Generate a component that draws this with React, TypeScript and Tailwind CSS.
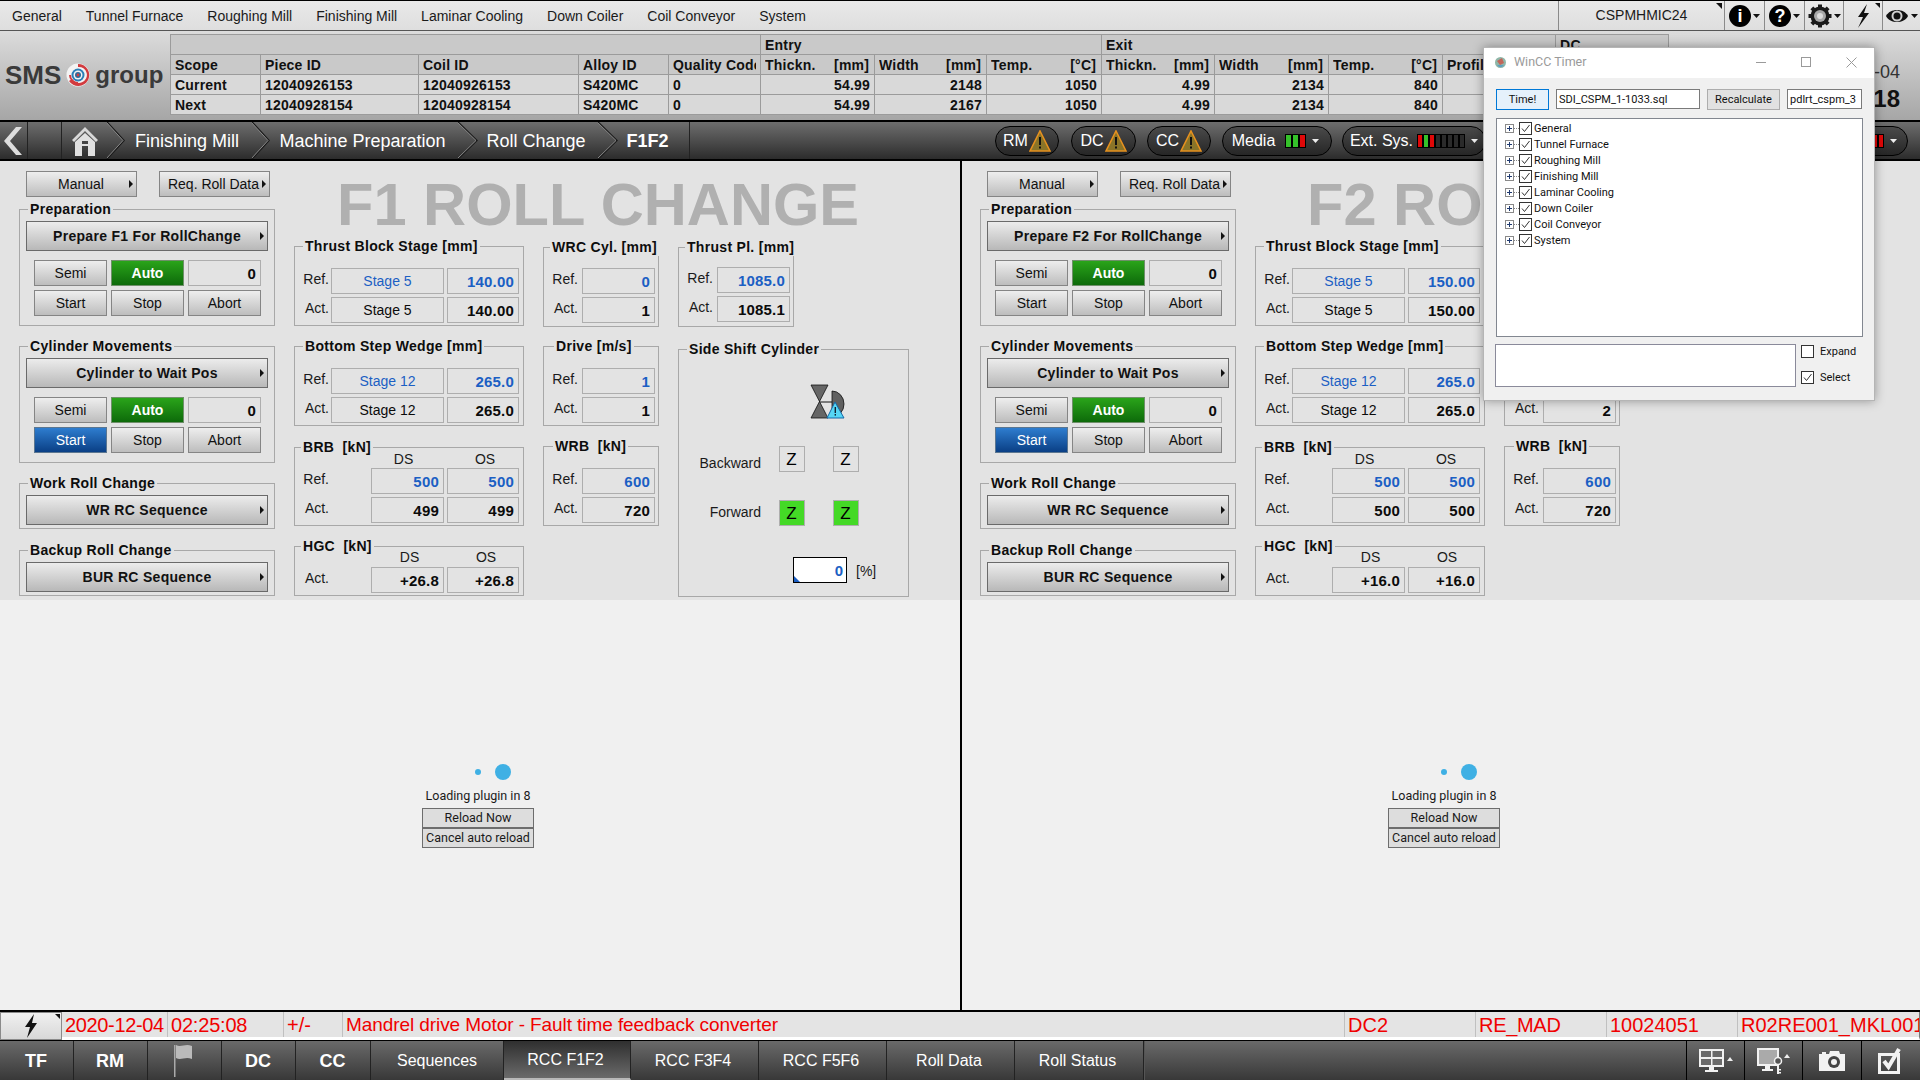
import React from "react";

const FONT = "font-['Liberation_Sans',Arial,sans-serif]";

function Arrow({ className = "" }: { className?: string }) {
  return (
    <svg width="4" height="8" viewBox="0 0 4 8" className={className}>
      <path d="M0 0 L4 4 L0 8 Z" fill="#111" />
    </svg>
  );
}

function Btn({ label, w, h = 26, bold, tone = "gray", arrow, dark, pad = 0 }: { label: string; w: number | string; h?: number; bold?: boolean; tone?: "gray" | "green" | "blue"; arrow?: boolean; dark?: boolean; pad?: number }) {
  const toneCls =
    tone === "green"
      ? "bg-[linear-gradient(#2aa41a,#0d6a0a)] text-white border-[#6f8f6a] font-bold"
      : tone === "blue"
        ? "bg-[linear-gradient(#2e7dcf,#0a3f85)] text-white border-[#5b7690]"
        : dark
          ? "bg-[linear-gradient(#ececec,#b8b8b8)] text-[#111] border-[#6a6a6a]"
          : "bg-[linear-gradient(#eeeeee,#bdbdbd)] text-[#111] border-[#858585]";
  return (
    <div
      style={{ width: w, height: h, paddingRight: pad }}
      className={`relative flex shrink-0 items-center justify-center border text-[14px] leading-none ${toneCls} ${bold ? "font-bold tracking-[0.3px]" : ""}`}
    >
      <span className="whitespace-nowrap">{label}</span>
      {arrow && <Arrow className="absolute right-[3px] top-1/2 -translate-y-1/2" />}
    </div>
  );
}

function Box({ v, w, blue, align = "right", h = 26 }: { v: string; w: number; blue?: boolean; align?: "right" | "center"; h?: number }) {
  return (
    <div
      style={{ width: w, height: h }}
      className={`flex shrink-0 items-center border border-[#aeaeae] text-[14px] leading-none ${align === "right" ? "justify-end pr-[4px] text-[15px] font-bold tracking-[0.2px]" : "justify-center"} ${blue ? "text-[#1b5fc4]" : "text-[#0b0b0b]"}`}
    >
      {v}
    </div>
  );
}

function Group({ legend, legendLeft = 8, w, h, className = "", hideLegend, children }: { legend: string; legendLeft?: number; w: number; h: number; className?: string; hideLegend?: boolean; children?: React.ReactNode }) {
  return (
    <div style={{ width: w, height: h }} className={`relative shrink-0 border border-[#a8a8a8] ${className}`}>
      <div style={{ left: legendLeft }} className={`absolute -top-[10px] whitespace-pre bg-[#e3e3e3] px-[2px] text-[14px] font-bold leading-[18px] tracking-[0.3px] text-[#0d0d0d] ${hideLegend ? "invisible" : ""}`}>
        {legend}
      </div>
      {children}
    </div>
  );
}

function Lbl({ t, w = 36 }: { t: string; w?: number }) {
  return (
    <div style={{ width: w }} className="shrink-0 pb-[4px] pr-[2px] text-right text-[14px] leading-none text-[#1a1a1a]">
      {t}
    </div>
  );
}

function ControlBlock({ title, action, hi, h = 117 }: { title: string; action: string; hi?: boolean; h?: number }) {
  return (
    <Group legend={title} legendLeft={8} w={256} h={h} className="px-[6px] pt-[11px]">
      <Btn label={action} w={242} h={30} bold arrow dark />
      <div className="mt-[9px] grid grid-cols-[73px_73px_73px] gap-x-[4px] gap-y-[4px] pl-[8px]">
        <Btn label="Semi" w={73} />
        <Btn label="Auto" w={73} tone="green" />
        <Box v="0" w={73} />
        <Btn label="Start" w={73} tone={hi ? "blue" : "gray"} />
        <Btn label="Stop" w={73} />
        <Btn label="Abort" w={73} />
      </div>
    </Group>
  );
}

function SeqBlock({ title, action, mt }: { title: string; action: string; mt: string }) {
  return (
    <div className={mt}>
      <Group legend={title} w={256} h={46} className="px-[6px] pt-[11px]">
        <Btn label={action} w={242} h={30} bold arrow dark />
      </Group>
    </div>
  );
}

function StageGroup({ legend, legendLeft, ref1, ref2, act1, act2, className }: { legend: string; legendLeft?: number; ref1: string; ref2: string; act1: string; act2: string; className?: string }) {
  return (
    <Group legend={legend} legendLeft={legendLeft} w={230} h={80} className={`pt-[21px] ${className || ""}`}>
      <div className="flex items-center">
        <Lbl t="Ref." w={36} />
        <Box v={ref1} w={113} blue align="center" />
        <div className="w-[3px]" />
        <Box v={ref2} w={72} blue />
      </div>
      <div className="mt-[3px] flex items-center">
        <Lbl t="Act." w={36} />
        <Box v={act1} w={113} align="center" />
        <div className="w-[3px]" />
        <Box v={act2} w={72} />
      </div>
    </Group>
  );
}

function SmallGroup({ legend, legendLeft, r, a, pt = 20, className = "", covered }: { legend: string; legendLeft?: number; r: string; a: string; pt?: number; className?: string; covered?: "all" | "top" }) {
  return (
    <Group legend={legend} legendLeft={legendLeft} w={116} h={80} className={`${className} ${covered === "all" ? "invisible" : ""}`} hideLegend={covered === "top"}>
      <div style={{ paddingTop: pt }}>
        <div className={`flex items-center ${covered ? "invisible" : ""}`}>
          <Lbl t="Ref." />
          <div className="w-[2px]" />
          <Box v={r} w={73} blue />
        </div>
        <div className="mt-[3px] flex items-center">
          <Lbl t="Act." />
          <div className="w-[2px]" />
          <Box v={a} w={73} />
        </div>
      </div>
    </Group>
  );
}

function Valve() {
  return (
    <svg width="36" height="36" viewBox="0 0 36 36">
      <path d="M22 7 A 12 13 0 0 1 22 33 Z" fill="#606060" stroke="#111" strokeWidth="0.8" />
      <path d="M1 1 L18 1 L1 34 L18 34 Z" fill="#666" stroke="#111" strokeWidth="0.8" />
      <line x1="10" y1="18" x2="22" y2="18" stroke="#111" strokeWidth="1" />
      <path d="M25 18 L34 34 L17 34 Z" fill="#55d6f5" stroke="#1668a8" strokeWidth="1" />
      <rect x="24.6" y="23" width="1.4" height="6" fill="#123" />
      <rect x="24.6" y="30" width="1.4" height="1.6" fill="#123" />
    </svg>
  );
}

function ZBox({ on }: { on?: boolean }) {
  return (
    <div className={`flex h-[26px] w-[26px] shrink-0 items-center justify-center border border-[#aeaeae] pr-[1px] text-[17px] leading-none text-black ${on ? "bg-[#44d926]" : ""}`}>Z</div>
  );
}

function SideShift() {
  return (
    <Group legend="Side Shift Cylinder" legendLeft={8} w={231} h={248} className="mt-[22px] pt-[34px]">
      <div className="pl-[131px]">
        <Valve />
      </div>
      <div className="mt-[26px] flex items-center">
        <div className="w-[82px] pt-[8px] text-right text-[14px] leading-none text-[#1a1a1a]">Backward</div>
        <div className="ml-[18px]"><ZBox /></div>
        <div className="ml-[28px]"><ZBox /></div>
      </div>
      <div className="mt-[28px] flex items-center">
        <div className="w-[82px] pb-[2px] text-right text-[14px] leading-none text-[#1a1a1a]">Forward</div>
        <div className="ml-[18px]"><ZBox on /></div>
        <div className="ml-[28px]"><ZBox on /></div>
      </div>
      <div className="ml-[114px] mt-[31px] flex items-center">
        <div className="relative flex h-[26px] w-[54px] items-center justify-end border border-black bg-white pr-[3px] text-[15px] font-bold leading-none text-[#1b5fc4]">
          0
          <svg width="6" height="6" viewBox="0 0 6 6" className="absolute bottom-0 left-0"><path d="M0 0 L6 6 L0 6 Z" fill="#1b5fc4" /></svg>
        </div>
        <div className="ml-[9px] pt-[2px] text-[14px] leading-none text-[#1a1a1a]">[%]</div>
      </div>
    </Group>
  );
}

type PanelData = { title: string; titlePl: string; prep: string; t: string; brbAct: string; hgc: string; drvAct: string; side?: boolean };

function Panel({ d, left }: { d: PanelData; left: number }) {
  return (
    <div className="h-[439px] bg-[#e3e3e3] pt-[10px]" style={{ paddingLeft: left }}>
      <div className="flex">
        <div className="w-[256px] shrink-0">
          <div className="flex h-[26px] gap-[22px] pl-[7px]">
            <Btn label="Manual" w={111} pad={1} arrow />
            <Btn label="Req. Roll Data" w={111} pad={2} arrow />
          </div>
          <div className="mt-[12px]"><ControlBlock title="Preparation" action={d.prep} /></div>
          <div className="mt-[20px]"><ControlBlock title="Cylinder Movements" action="Cylinder to Wait Pos" hi /></div>
          <SeqBlock title="Work Roll Change" action="WR RC Sequence" mt="mt-[20px]" />
          <SeqBlock title="Backup Roll Change" action="BUR RC Sequence" mt="mt-[21px]" />
        </div>
        <div className="ml-[19px]">
          <div className={`h-[75px] whitespace-nowrap text-[59.6px] font-bold leading-[68px] text-[#b0b0b0] ${d.titlePl}`}>{d.title}</div>
          <div className="flex">
            <div className="w-[230px] shrink-0">
              <StageGroup legend="Thrust Block Stage [mm]" legendLeft={8} ref1="Stage 5" ref2={d.t} act1="Stage 5" act2={d.t} />
              <StageGroup legend="Bottom Step Wedge [mm]" legendLeft={8} ref1="Stage 12" ref2="265.0" act1="Stage 12" act2="265.0" className="mt-[20px]" />
              <Group legend="BRB  [kN]" legendLeft={6} w={230} h={79} className="mt-[21px]">
                <div className="flex h-[20px] items-start pl-[72px] pt-[4px] text-[14px] leading-none text-[#1a1a1a]">
                  <div className="w-[73px] text-center">DS</div>
                  <div className="ml-[9px] w-[72px] text-center">OS</div>
                </div>
                <div className="flex items-center">
                  <Lbl t="Ref." /><div className="w-[40px]" />
                  <Box v="500" w={73} blue /><div className="w-[3px]" /><Box v="500" w={72} blue />
                </div>
                <div className="mt-[3px] flex items-center">
                  <Lbl t="Act." /><div className="w-[40px]" />
                  <Box v={d.brbAct} w={73} /><div className="w-[3px]" /><Box v={d.brbAct} w={72} />
                </div>
              </Group>
              <Group legend="HGC  [kN]" legendLeft={6} w={230} h={50} className="mt-[20px]">
                <div className="flex h-[20px] items-start pl-[78px] pt-[3px] text-[14px] leading-none text-[#1a1a1a]">
                  <div className="w-[73px] text-center">DS</div>
                  <div className="ml-[4px] w-[72px] text-center">OS</div>
                </div>
                <div className="flex items-center">
                  <Lbl t="Act." /><div className="w-[40px]" />
                  <Box v={d.hgc} w={73} /><div className="w-[3px]" /><Box v={d.hgc} w={72} />
                </div>
              </Group>
            </div>
            <div className="ml-[19px] w-[116px] shrink-0 pt-[1px]">
              <SmallGroup legend="WRC Cyl. [mm]" legendLeft={6} r="0" a="1" covered={d.side ? undefined : "all"} />
              <SmallGroup legend="Drive [m/s]" legendLeft={10} r="1" a={d.drvAct} pt={21} className="mt-[19px]" covered={d.side ? undefined : "top"} />
              <SmallGroup legend="WRB  [kN]" legendLeft={9} r="600" a="720" pt={21} className="mt-[20px]" />
            </div>
            {d.side && (
              <div className="ml-[19px] w-[116px] shrink-0 pt-[1px]">
                <SmallGroup legend="Thrust Pl. [mm]" legendLeft={6} r="1085.0" a="1085.1" pt={19} />
                <SideShift />
              </div>
            )}
          </div>
        </div>
      </div>
    </div>
  );
}

function Loading({ cls }: { cls: string }) {
  return (
    <div className={`flex flex-1 flex-col items-center bg-[#f0f0f0] pt-[164px] font-['Roboto',sans-serif] text-[12.5px] text-[#1a1a1a] ${cls}`}>
      <div className="flex h-[16px] w-[112px] items-center pl-[53px]">
        <div className="h-[6px] w-[6px] rounded-full bg-[#3fb0e4]" />
        <div className="ml-[14px] h-[16px] w-[16px] rounded-full bg-[#3fb0e4]" />
      </div>
      <div className="mt-[8px] h-[16px] leading-[16px]">Loading plugin in 8</div>
      <div className="mt-[4px] flex h-[20px] w-[112px] items-center justify-center border border-[#6d6d6d] bg-[#dddddd] pt-[1px] leading-none">Reload Now</div>
      <div className="flex h-[20px] w-[112px] items-center justify-center border border-[#6d6d6d] bg-[#dddddd] pt-[1px] leading-none">Cancel auto reload</div>
    </div>
  );
}

function Caret({ color = "#111" }: { color?: string }) {
  return (
    <svg width="7" height="4" viewBox="0 0 7 4"><path d="M0 0 H7 L3.5 4 Z" fill={color} /></svg>
  );
}

function TopIcon({ children, w = 40 }: { children: React.ReactNode; w?: number }) {
  return (
    <div style={{ width: w }} className="flex h-full shrink-0 items-center justify-center gap-[2px] border-l border-[#8a8a8a]">
      {children}
    </div>
  );
}

function GlyphCircle({ c }: { c: string }) {
  return (
    <div className="flex h-[22px] w-[22px] items-center justify-center rounded-full bg-black text-[18px] font-bold leading-none text-white">{c}</div>
  );
}

function TopBar() {
  const items = ["General", "Tunnel Furnace", "Roughing Mill", "Finishing Mill", "Laminar Cooling", "Down Coiler", "Coil Conveyor", "System"];
  return (
    <div className="flex h-[31px] shrink-0 items-stretch border-y border-t-black border-b-[#555] bg-[linear-gradient(#e9e9e9,#dedede)]">
      <div className="flex flex-1 items-center gap-[24px] pl-[12px] text-[14px] leading-none text-[#1a1a1a]">
        {items.map((i) => <span key={i} className="whitespace-nowrap">{i}</span>)}
      </div>
      <div className="relative flex w-[166px] items-center justify-center border-l border-[#8a8a8a] text-[14px] text-[#1a1a1a]">
        CSPMHMIC24
        <svg width="6" height="6" viewBox="0 0 6 6" className="absolute right-[2px] top-[2px]"><path d="M0 0 H6 V6 Z" fill="#111" /></svg>
      </div>
      <TopIcon><GlyphCircle c="i" /><Caret /></TopIcon>
      <TopIcon><GlyphCircle c="?" /><Caret /></TopIcon>
      <TopIcon w={39}>
        <svg width="24" height="24" viewBox="0 0 24 24">
          <g fill="#1a1a1a">
            <circle cx="12" cy="12" r="9.500" />
            <rect x="10" y="0.500" width="4" height="23" />
            <rect x="0.500" y="10" width="23" height="4" />
            <rect x="10" y="0.500" width="4" height="23" transform="rotate(45 12 12)" />
            <rect x="10" y="0.500" width="4" height="23" transform="rotate(-45 12 12)" />
          </g>
          <circle cx="12" cy="12" r="6" fill="#a8a8a8" />
          <circle cx="12" cy="12" r="3" fill="#dcdcdc" />
        </svg>
        <Caret />
      </TopIcon>
      <TopIcon w={39}>
        <div className="relative flex h-full w-full items-center justify-center">
          <svg width="16" height="24" viewBox="0 0 16 24"><path d="M12 0 L3 13 H8 L3 24 L14 9 H9 Z" fill="#111" /></svg>
          <svg width="5" height="5" viewBox="0 0 5 5" className="absolute right-[2px] top-[2px]"><path d="M0 0 H5 V5 Z" fill="#111" /></svg>
        </div>
      </TopIcon>
      <TopIcon w={38}>
        <svg width="24" height="18" viewBox="0 0 24 18">
          <path d="M1 9 C5 1 19 1 23 9 C19 17 5 17 1 9 Z" fill="#111" />
          <circle cx="12" cy="9" r="5.500" fill="#cfcfcf" />
          <circle cx="12" cy="9" r="3.500" fill="#111" />
        </svg>
        <Caret />
      </TopIcon>
    </div>
  );
}

function Logo() {
  return (
    <div className="flex w-[170px] shrink-0 items-center pb-[1px] pl-[5px] text-[#3a3a3a]">
      <span className="text-[26px] font-bold leading-none">SMS</span>
      <svg width="24" height="24" viewBox="0 0 24 24" className="ml-[5px] shrink-0">
        <circle cx="12" cy="12" r="11.500" fill="#f3f3f3" />
        <path d="M12 1 A 11 11 0 1 1 3 18 L6 16 A 8 8 0 1 0 12 4 Z" fill="#d23b3f" />
        <path d="M12 21 A 9 9 0 0 1 3 12 L5 12 A 7 7 0 0 0 12 19 Z" fill="#d23b3f" />
        <circle cx="12" cy="12" r="6.500" fill="#2b7fb8" />
        <circle cx="12" cy="12" r="4.500" fill="#f3f3f3" />
        <circle cx="12" cy="12" r="3" fill="#2b6c9c" />
        <circle cx="12" cy="12" r="1.400" fill="#d23b3f" />
      </svg>
      <span className="ml-[5px] text-[24px] font-bold leading-none">group</span>
    </div>
  );
}

function Th({ a, b, className = "" }: { a: string; b?: string; className?: string }) {
  return (
    <td className={`overflow-hidden whitespace-nowrap border border-[#9b9b9b] bg-[#c9c9c9] px-[4px] ${className}`}>
      <div className="flex justify-between overflow-hidden"><span>{a}</span>{b && <span className="pr-[1px]">{b}</span>}</div>
    </td>
  );
}

function Tr({ cells }: { cells: string[] }) {
  return (
    <tr className="h-[20px] bg-[#d9d9d9]">
      {cells.map((c, i) => (
        <td key={i} className={`overflow-hidden whitespace-nowrap border border-[#9b9b9b] px-[4px] ${i >= 5 ? "text-right" : ""}`}>{c}</td>
      ))}
    </tr>
  );
}

function InfoTable() {
  const widths = [90, 158, 160, 90, 92, 114, 112, 115, 113, 114, 114, 113, 113];
  return (
    <table className="w-[1498px] shrink-0 table-fixed border-collapse self-start text-[14px] font-bold leading-[16px] tracking-[0.2px] text-[#111]">
      <colgroup>{widths.map((w, i) => <col key={i} style={{ width: w }} />)}</colgroup>
      <tbody>
        <tr className="h-[20px] bg-[#c9c9c9]">
          <td colSpan={5} className="border border-[#9b9b9b]" />
          <td colSpan={3} className="border border-[#9b9b9b] px-[4px]">Entry</td>
          <td colSpan={4} className="border border-[#9b9b9b] px-[4px]">Exit</td>
          <td className="border border-[#9b9b9b] px-[4px]">DC</td>
        </tr>
        <tr className="h-[20px]">
          <Th a="Scope" /><Th a="Piece ID" /><Th a="Coil ID" /><Th a="Alloy ID" /><Th a="Quality Code" />
          <Th a="Thickn." b="[mm]" /><Th a="Width" b="[mm]" /><Th a="Temp." b="[°C]" />
          <Th a="Thickn." b="[mm]" /><Th a="Width" b="[mm]" /><Th a="Temp." b="[°C]" /><Th a="Profile" /><Th a="" />
        </tr>
        <Tr cells={["Current", "12040926153", "12040926153", "S420MC", "0", "54.99", "2148", "1050", "4.99", "2134", "840", "", ""]} />
        <Tr cells={["Next", "12040928154", "12040928154", "S420MC", "0", "54.99", "2167", "1050", "4.99", "2134", "840", "", ""]} />
      </tbody>
    </table>
  );
}

function Header() {
  return (
    <div className="flex h-[89px] shrink-0 items-start bg-[linear-gradient(#dcdcdc,#a6a6a6)]">
      <div className="flex h-full items-center"><Logo /></div>
      <div className="pt-[3px]"><InfoTable /></div>
      <div className="flex-1 pr-[20px] pt-[32px] text-right leading-none">
        <div className="text-[18px] text-[#333]">2020-12-04</div>
        <div className="mt-[6px] text-[24px] font-bold text-[#111]">02:25:18</div>
      </div>
    </div>
  );
}

function Chevron({ w = 20 }: { w?: number }) {
  return (
    <svg width={w} height="37" viewBox={`0 0 ${w} 37`} className="shrink-0">
      <path d={`M0 0 L${w - 1} 18.500 L0 37`} fill="none" stroke="#1a1a1a" strokeWidth="1.500" />
      <path d={`M-1 0 L${w - 2} 18.500 L-1 37`} fill="none" stroke="#8a8a8a" strokeWidth="1" />
    </svg>
  );
}

function Warn() {
  return (
    <svg width="22" height="22" viewBox="0 0 22 22" className="-ml-[1px] shrink-0">
      <path d="M11 1 L21 21 H1 Z" fill="#8a7428" stroke="#e6911f" strokeWidth="1.600" />
      <rect x="10" y="7" width="2" height="8" fill="#111" />
      <rect x="10" y="16.500" width="2" height="2" fill="#111" />
    </svg>
  );
}

function Pill({ children, w, className = "" }: { children: React.ReactNode; w: number; className?: string }) {
  return (
    <div style={{ width: w }} className={`flex h-[30px] shrink-0 items-center justify-center gap-[2px] rounded-full border border-black bg-[linear-gradient(#4a4a4a,#262626)] text-[16px] leading-none text-white ${className}`}>
      {children}
    </div>
  );
}

function Leds({ c, w }: { c: string[]; w: number }) {
  return (
    <div className="flex h-[14px] shrink-0">
      {c.map((x, i) => <div key={i} style={{ backgroundColor: x, width: w }} className="h-full border border-black" />)}
    </div>
  );
}

function Home() {
  return (
    <svg width="26" height="30" viewBox="0 0 26 30">
      <path d="M13 1 L26 14 L24 16 L13 5 L2 16 L0 14 Z" fill="#d8d8d8" />
      <path d="M3 16 L13 7 L23 16 V30 H16 V20 H10 V30 H3 Z" fill="#e0e0e0" />
      <rect x="10" y="15" width="6" height="3" fill="#444" />
    </svg>
  );
}

function Nav() {
  return (
    <div className="flex h-[41px] shrink-0 items-stretch border-y-2 border-black bg-[linear-gradient(#6e6e6e,#2c2c2c)] text-[18px] leading-none text-white">
      <div className="flex w-[28px] items-center justify-center border-r border-[#222]">
        <svg width="20" height="28" viewBox="0 0 20 28"><path d="M18 0 L6 14 L18 28 H12 L0 14 L12 0 Z" fill="#ddd" /></svg>
      </div>
      <div className="w-[34px] border-r border-[#222]" />
      <div className="flex w-[45px] items-center justify-center pl-[1px]"><Home /></div>
      <Chevron w={18} />
      <div className="flex w-[127px] items-center justify-center pr-[3px]">Finishing Mill</div>
      <Chevron w={18} />
      <div className="flex w-[188px] items-center justify-center pr-[3px]">Machine Preparation</div>
      <Chevron />
      <div className="flex w-[120px] items-center justify-center pr-[4px]">Roll Change</div>
      <Chevron />
      <div className="flex w-[72px] items-center justify-center border-r border-[#222] pr-[12px] font-bold">F1F2</div>
      <div className="flex flex-1 items-center pl-[305px]">
        <Pill w={64}>RM<Warn /></Pill>
        <Pill w={65} className="ml-[12px]">DC<Warn /></Pill>
        <Pill w={64} className="ml-[11px]">CC<Warn /></Pill>
        <Pill w={110} className="ml-[11px] pr-[3px]">Media<div className="ml-[8px]"><Leds w={7} c={["#35c22a", "#35c22a", "#e00808"]} /></div><div className="ml-[4px]"><Caret color="#eee" /></div></Pill>
        <Pill w={144} className="ml-[10px]">Ext. Sys.<div className="ml-[2px]"><Leds w={6} c={["#e00808", "#35c22a", "#e00808", "#2a2a2a", "#2a2a2a", "#2a2a2a", "#2a2a2a", "#2a2a2a"]} /></div><div className="ml-[4px]"><Caret color="#eee" /></div></Pill>
        <Pill w={150} className="ml-[272px] justify-end pr-[10px]"><Leds w={6} c={["#e00808", "#e00808"]} /><div className="ml-[4px]"><Caret color="#eee" /></div></Pill>
      </div>
    </div>
  );
}

function Status() {
  const fields: [string, number, string][] = [
    ["2020-12-04", 106, "tracking-[-0.35px]"],
    ["02:25:08", 116, "tracking-[-0.2px]"],
    ["+/-", 59, ""],
    ["Mandrel drive Motor - Fault time feedback converter", 1002, "text-[19px] tracking-[-0.08px]"],
    ["DC2", 131, ""],
    ["RE_MAD", 131, "tracking-[-0.3px]"],
    ["10024051", 131, ""],
    ["R02RE001_MKL001", 182, ""],
  ];
  return (
    <div className="flex h-[30px] shrink-0 border-t-2 border-black bg-[#e4e4e4]">
      <div className="relative flex w-[62px] shrink-0 items-center justify-center border border-[#8a8a8a] bg-[linear-gradient(#f0f0f0,#d8d8d8)]">
        <svg width="14" height="24" viewBox="0 0 14 24"><path d="M10 0 L1 13 H6 L3 24 L13 9 H8 Z" fill="#111" /></svg>
        <svg width="5" height="5" viewBox="0 0 5 5" className="absolute right-[1px] top-[1px]"><path d="M0 0 H5 V5 Z" fill="#111" /></svg>
      </div>
      <div className="flex flex-1 overflow-hidden border-b-[3px] border-r border-b-white border-r-[#777] text-[20px] leading-none text-[#f00000]">
        {fields.map(([t, w, c]) => (
          <div key={t} style={{ width: w }} className={`flex shrink-0 items-center overflow-hidden whitespace-nowrap border-r border-[#c0c0c0] pl-[3px] ${c}`}>{t}</div>
        ))}
      </div>
    </div>
  );
}

function Tab({ w, children, active, bold, ml }: { w: number; children: React.ReactNode; active?: boolean; bold?: boolean; ml?: number }) {
  return (
    <div
      style={{ width: w, marginLeft: ml }}
      className={`flex shrink-0 items-center justify-center border-r border-[#222] leading-none text-white ${bold ? "pr-[1px] text-[18px] font-bold" : "pr-[3px] text-[16px]"} ${active ? "bg-[linear-gradient(#2f2f2f,#6a6a6a)] border-b-2 border-b-[#b8b8b8]" : "bg-[linear-gradient(#6a6a6a,#383838)]"}`}
    >
      {children}
    </div>
  );
}

function BottomTabs() {
  return (
    <div className="flex h-[40px] shrink-0 border-t border-black bg-[linear-gradient(#6a6a6a,#383838)]">
      <Tab w={74} bold>TF</Tab>
      <Tab w={74} bold>RM</Tab>
      <Tab w={74}>
        <svg width="20" height="36" viewBox="0 0 20 36"><rect x="1" y="2" width="1.500" height="32" fill="#aaa" /><path d="M3 2 C8 5 12 0 19 3 V16 C12 13 8 18 3 15 Z" fill="#bbb" /></svg>
      </Tab>
      <Tab w={74} bold>DC</Tab>
      <Tab w={75} bold>CC</Tab>
      <Tab w={130} ml={3}>Sequences</Tab>
      <Tab w={127} active>RCC F1F2</Tab>
      <Tab w={128}>RCC F3F4</Tab>
      <Tab w={128}>RCC F5F6</Tab>
      <Tab w={128}>Roll Data</Tab>
      <Tab w={129}>Roll Status</Tab>
      <div className="flex-1 border-l border-[#555]" />
      <div className="flex w-[59px] shrink-0 items-center justify-center border-x border-black">
        <svg width="34" height="24" viewBox="0 0 34 24">
          <rect x="0" y="0" width="25" height="18" fill="#f2f2f2" />
          <rect x="2" y="2" width="10" height="6" fill="#6a6a6a" /><rect x="13.500" y="2" width="9.500" height="6" fill="#6a6a6a" />
          <rect x="2" y="10" width="10" height="6" fill="#6a6a6a" /><rect x="13.500" y="10" width="9.500" height="6" fill="#6a6a6a" />
          <rect x="10" y="18" width="5" height="3" fill="#f2f2f2" /><rect x="6" y="21" width="13" height="2" fill="#f2f2f2" />
          <path d="M28 12 L31 8 L34 12 Z" fill="#eee" />
        </svg>
      </div>
      <div className="flex w-[58px] shrink-0 items-center justify-center border-r border-black">
        <svg width="34" height="26" viewBox="0 0 34 26">
          <rect x="0" y="0" width="22" height="18" fill="#f2f2f2" />
          <rect x="2" y="2" width="18" height="14" fill="#aaa" />
          <rect x="8" y="18" width="5" height="3" fill="#f2f2f2" /><rect x="5" y="21" width="11" height="2" fill="#f2f2f2" />
          <circle cx="21" cy="13" r="3.500" fill="#555" stroke="#f2f2f2" strokeWidth="1.500" />
          <rect x="20" y="16" width="2" height="10" fill="#f2f2f2" /><rect x="22" y="21" width="2" height="1.500" fill="#f2f2f2" /><rect x="22" y="24" width="2" height="1.500" fill="#f2f2f2" />
          <path d="M27 10 L30 6 L33 10 Z" fill="#eee" />
        </svg>
      </div>
      <div className="flex w-[59px] shrink-0 items-center justify-center border-r border-black">
        <svg width="26" height="20" viewBox="0 0 26 20">
          <path d="M0 3 H3 V1 H7 V3 H10 L11 0 H20 L21 3 H26 V20 H0 Z" fill="#f2f2f2" />
          <circle cx="15" cy="11" r="6" fill="#444" /><circle cx="15" cy="11" r="3" fill="#f2f2f2" />
        </svg>
      </div>
      <div className="flex w-[58px] shrink-0 items-center justify-center">
        <svg width="26" height="26" viewBox="0 0 26 26">
          <rect x="1.500" y="6.500" width="19" height="18" fill="none" stroke="#f2f2f2" strokeWidth="3" />
          <path d="M6 13 L10.500 19 L21 1" fill="none" stroke="#f2f2f2" strokeWidth="4" />
        </svg>
      </div>
    </div>
  );
}

function Check({ on = true }: { on?: boolean }) {
  return (
    <div className="flex h-[13px] w-[13px] shrink-0 items-center justify-center border border-[#333] bg-white">
      {on && <svg width="11" height="11" viewBox="0 0 11 11"><path d="M2 5.500 L4.500 8.500 L9.500 2" fill="none" stroke="#333" strokeWidth="1" /></svg>}
    </div>
  );
}

function WinInput({ v, w }: { v: string; w: number }) {
  return <div style={{ width: w }} className="flex h-[20px] shrink-0 items-center overflow-hidden whitespace-nowrap border border-[#7a7a7a] bg-white pl-[2px] pt-[1px] leading-none">{v}</div>;
}

function Timer() {
  const tree = ["General", "Tunnel Furnace", "Roughing Mill", "Finishing Mill", "Laminar Cooling", "Down Coiler", "Coil Conveyor", "System"];
  return (
    <div className="absolute left-[1483px] top-[47px] flex h-[354px] w-[392px] flex-col border border-[#b5b5b5] bg-[#f0f0f0] font-['Roboto',sans-serif] text-[11px] text-[#111] shadow-[0_0_10px_rgba(0,0,0,0.35)]">
      <div className="flex h-[30px] shrink-0 items-center bg-white pb-[2px] pl-[10px] text-[#9a9a9a]">
        <svg width="13" height="13" viewBox="0 0 13 13"><circle cx="6.500" cy="6.500" r="5.500" fill="#8fb6a8" /><path d="M3 5 L8 2 L10 7 L6 9 Z" fill="#c2665a" /><path d="M3 9 H10 L8 11 H5 Z" fill="#5ea0c0" /></svg>
        <span className="ml-[7px] text-[12.5px] leading-none">WinCC Timer</span>
        <div className="flex-1" />
        <div className="h-[1px] w-[10px] bg-[#9a9a9a]" />
        <div className="ml-[35px] h-[10px] w-[10px] border border-[#9a9a9a]" />
        <svg width="11" height="11" viewBox="0 0 11 11" className="ml-[35px] mr-[17px]"><path d="M0.500 0.500 L10.500 10.500 M10.500 0.500 L0.500 10.500" stroke="#9a9a9a" strokeWidth="1" /></svg>
      </div>
      <div className="flex flex-col px-[12px] pt-[11px]">
        <div className="flex items-start">
          <div className="flex h-[21px] w-[53px] shrink-0 items-center justify-center border border-[#0078d7] bg-[#e5f1fb] leading-none">Time!</div>
          <div className="ml-[7px]"><WinInput v="SDI_CSPM_1-1033.sql" w={144} /></div>
          <div className="ml-[7px] flex h-[21px] w-[73px] shrink-0 items-center justify-center border border-[#adadad] bg-[#e1e1e1] leading-none">Recalculate</div>
          <div className="ml-[7px]"><WinInput v="pdlrt_cspm_3" w={75} /></div>
        </div>
        <div className="mt-[8px] h-[219px] w-[367px] border border-[#828790] bg-white pl-[8px] pt-[1px]">
          {tree.map((t) => (
            <div key={t} className="flex h-[16px] items-center leading-none">
              <div className="flex h-[9px] w-[9px] shrink-0 items-center justify-center border border-[#8a8a8a]">
                <svg width="7" height="7" viewBox="0 0 7 7"><path d="M3.500 1 V6 M1 3.500 H6" stroke="#1f3a70" strokeWidth="1" /></svg>
              </div>
              <div className="h-0 w-[5px] border-t border-dotted border-[#888]" />
              <Check />
              <span className="ml-[2px] whitespace-nowrap">{t}</span>
            </div>
          ))}
        </div>
        <div className="-ml-[1px] mt-[7px] flex">
          <div className="h-[43px] w-[301px] border border-[#8a8a9a] bg-white" />
          <div className="ml-[5px] flex flex-col gap-[13px] pt-[1px] leading-none">
            <div className="flex items-center"><Check on={false} /><span className="ml-[6px]">Expand</span></div>
            <div className="flex items-center"><Check /><span className="ml-[6px]">Select</span></div>
          </div>
        </div>
      </div>
    </div>
  );
}

export default function App() {
  const f1: PanelData = { title: "F1 ROLL CHANGE", titlePl: "pl-[43px]", prep: "Prepare F1 For RollChange", t: "140.00", brbAct: "499", hgc: "+26.8", drvAct: "1", side: true };
  const f2: PanelData = { title: "F2 RO", titlePl: "pl-[52px]", prep: "Prepare F2 For RollChange", t: "150.00", brbAct: "500", hgc: "+16.0", drvAct: "2" };
  return (
    <div className={`relative flex h-[1080px] w-[1920px] flex-col overflow-hidden bg-[#e3e3e3] ${FONT}`}>
      <TopBar />
      <Header />
      <Nav />
      <div className="flex h-[849px] shrink-0">
        <div className="flex w-[960px] shrink-0 flex-col overflow-hidden">
          <Panel d={f1} left={19} />
          <Loading cls="pr-[4px]" />
        </div>
        <div className="w-[2px] shrink-0 bg-black" />
        <div className="flex flex-1 flex-col overflow-hidden">
          <Panel d={f2} left={18} />
          <Loading cls="pl-[6px]" />
        </div>
      </div>
      <Status />
      <BottomTabs />
      <Timer />
    </div>
  );
}
